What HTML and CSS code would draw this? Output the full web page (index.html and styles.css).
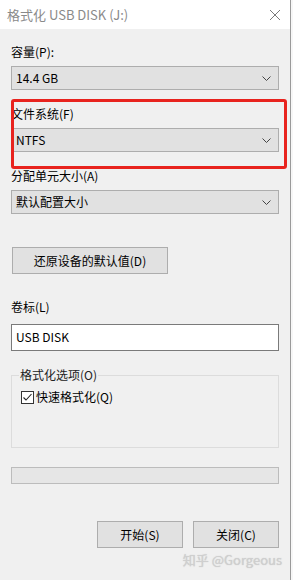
FILE: index.html
```html
<!DOCTYPE html>
<html lang="zh-CN">
<head>
    <meta charset="UTF-8">
    <meta name="viewport" content="width=device-width, initial-scale=1.0">
    <title>格式化 USB DISK (J:)</title>
    <link rel="stylesheet" href="styles.css">
</head>
<body>
    <div class="window">
        <div class="titlebar">
            <span class="title">格式化 USB DISK (J:)</span>
            <svg class="close" width="12" height="12" viewBox="0 0 12 12">
                <path d="M1 1 L11 11 M11 1 L1 11" stroke="#7a7a7a" stroke-width="1" fill="none"/>
            </svg>
        </div>
        <div class="content">
            <label class="field-label label-first">容量(P):</label>
            <div class="select"><span>14.4 GB</span><svg class="chevron" width="9" height="5" viewBox="0 0 9 5"><path d="M0.5 0.5 L4.5 4.5 L8.5 0.5" stroke="#444" fill="none"/></svg></div>

            <label class="field-label">文件系统(F)</label>
            <div class="select"><span>NTFS</span><svg class="chevron" width="9" height="5" viewBox="0 0 9 5"><path d="M0.5 0.5 L4.5 4.5 L8.5 0.5" stroke="#444" fill="none"/></svg></div>

            <label class="field-label">分配单元大小(A)</label>
            <div class="select"><span>默认配置大小</span><svg class="chevron" width="9" height="5" viewBox="0 0 9 5"><path d="M0.5 0.5 L4.5 4.5 L8.5 0.5" stroke="#444" fill="none"/></svg></div>

            <button class="btn btn-restore">还原设备的默认值(D)</button>

            <label class="field-label label-volume">卷标(L)</label>
            <div class="textbox">USB DISK</div>

            <fieldset class="group">
                <legend>格式化选项(O)</legend>
                <div class="check-row">
                    <span class="checkbox"><svg width="11" height="11" viewBox="0 0 11 11"><path d="M1.5 5.5 L4 8 L9.5 2" stroke="#222" stroke-width="1.1" fill="none"/></svg></span>
                    <span>快速格式化(Q)</span>
                </div>
            </fieldset>

            <div class="progress"></div>

            <div class="actions">
                <button class="btn btn-action">开始(S)</button>
                <button class="btn btn-action">关闭(C)</button>
            </div>
            <div class="watermark">知乎 @Gorgeous</div>
        </div>
        <div class="highlight"></div>
    </div>
    <div class="backdrop"></div>
</body>
</html>
```

FILE: styles.css
```css
body {
    margin: 0;
    padding: 0;
    display: flex;
    width: 293px;
    height: 580px;
    overflow: hidden;
    font-family: "Noto Sans CJK SC", "Noto Sans", sans-serif;
    font-size: 12px;
    color: #000;
    background: #f0f0f0;
}
.window {
    position: relative;
    width: 291px;
    height: 580px;
    background: #f0f0f0;
    border-right: 1px solid #9a9a9a;
    box-sizing: border-box;
    flex-shrink: 0;
}
.backdrop {
    flex: 1;
    background: #f7f7f7;
}
.titlebar {
    height: 29px;
    background: #fff;
    display: flex;
    align-items: center;
    justify-content: space-between;
    padding: 0 9px 0 7px;
}
.title {
    color: #8a8a8a;
    font-size: 13px;
    line-height: 16px;
}
.close {
    margin-top: 1px;
}
.content {
    padding: 0 11px 0 11px;
    display: flex;
    flex-direction: column;
}
.field-label {
    display: block;
    line-height: 16px;
    margin-top: 16px;
    margin-bottom: 6px;
}
.label-first {
    margin-top: 15px;
}
.select {
    height: 24px;
    box-sizing: border-box;
    background: #e1e1e1;
    border: 1px solid #adadad;
    display: flex;
    align-items: center;
    justify-content: space-between;
    padding: 0 7px 0 4px;
    line-height: 16px;
}
.btn {
    font-family: inherit;
    font-size: 12px;
    color: #000;
    background: #e1e1e1;
    border: 1px solid #adadad;
    height: 27px;
    padding: 0;
    line-height: 16px;
}
.btn-restore {
    width: 156px;
    margin-top: 33px;
    align-self: flex-start;
    margin-left: 1px;
}
.label-volume {
    margin-top: 25px;
    margin-bottom: 9px;
}
.textbox {
    height: 27px;
    box-sizing: border-box;
    background: #fff;
    border: 1px solid #7a7a7a;
    padding: 0 4px;
    line-height: 24px;
}
.group {
    margin: 16px 0 0 0;
    padding: 6px 9px 0 9px;
    height: 81px;
    box-sizing: border-box;
    border: 1px solid #dcdcdc;
}
.group legend {
    padding: 0 1px;
    margin-left: -2px;
    line-height: 16px;
    color: #222;
}
.check-row {
    display: flex;
    align-items: center;
    gap: 2px;
    line-height: 16px;
}
.checkbox {
    width: 13px;
    height: 13px;
    box-sizing: border-box;
    border: 1px solid #333;
    background: #fff;
    display: flex;
    align-items: center;
    justify-content: center;
}
.progress {
    margin-top: 19px;
    height: 17px;
    box-sizing: border-box;
    background: #e6e6e6;
    border: 1px solid #bcbcbc;
}
.actions {
    margin-top: 37px;
    display: flex;
    justify-content: flex-end;
    gap: 10px;
}
.btn-action {
    width: 86px;
}
.watermark {
    align-self: flex-end;
    margin-right: -3px;
    margin-top: 4px;
    font-size: 13px;
    line-height: 16px;
    color: #cfcfcf;
    text-shadow: 0 0 1px rgba(120, 120, 120, 0.35);
}
.highlight {
    position: absolute;
    left: 11px;
    top: 99px;
    width: 276px;
    height: 70px;
    box-sizing: border-box;
    border: 3px solid #e8231e;
    border-radius: 3px;
}
```
